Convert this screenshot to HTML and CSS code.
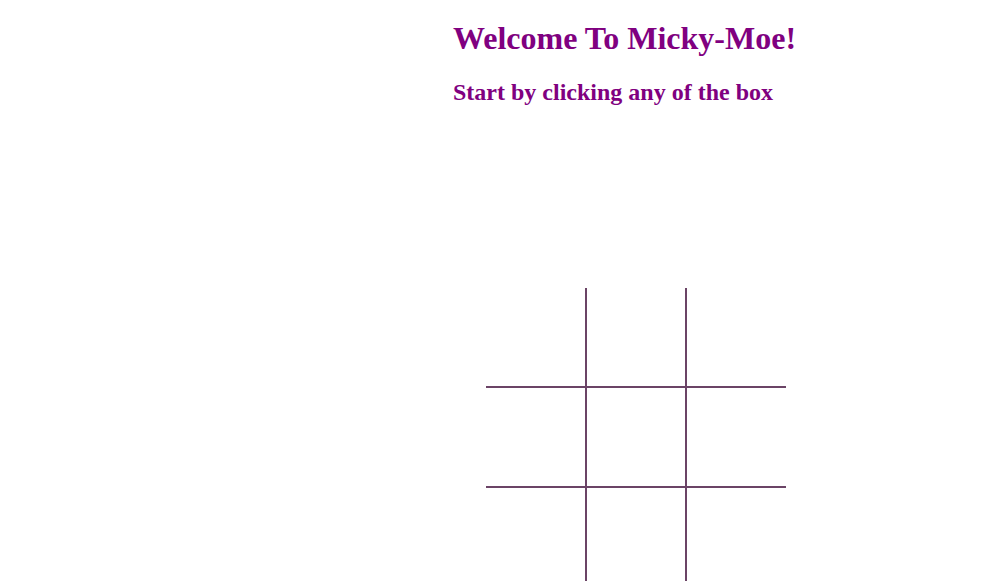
FILE: index.html
```html
<!DOCTYPE html>
<html>
<head>
<meta charset="utf-8">
<title>Micky-Moe</title>
<link rel="stylesheet" href="styles.css">
</head>
<body>
<div class="page">
  <h1 class="title">Welcome To Micky-Moe!</h1>
  <h2 class="subtitle">Start by clicking any of the box</h2>
  <div class="board">
    <div class="cell c1 r1"></div>
    <div class="cell c2 r1"></div>
    <div class="cell c3 r1"></div>
    <div class="cell c1 r2"></div>
    <div class="cell c2 r2"></div>
    <div class="cell c3 r2"></div>
    <div class="cell c1 r3"></div>
    <div class="cell c2 r3"></div>
    <div class="cell c3 r3"></div>
  </div>
</div>
</body>
</html>
```
FILE: styles.css
```css
html, body {
  background: #ffffff;
}
body {
  margin: 0;
  font-family: "Liberation Serif", "Times New Roman", serif;
}
.page {
  padding: 0 0 0 453px;
}
.title {
  color: #800080;
  font-size: 32px;
  font-weight: bold;
  margin: 20.44px 0 21.44px;
}
.subtitle {
  color: #800080;
  font-size: 24px;
  font-weight: bold;
  margin: 19.92px 0;
}
.board {
  display: grid;
  grid-template-columns: 101px 100px 99px;
  grid-template-rows: 100px 100px 100px;
  margin-left: 33px;
  margin-top: 182px;
  width: 300px;
}
.cell {
  box-sizing: border-box;
}
.c1, .c2 {
  border-right: 2px solid #6b4466;
}
.r1, .r2 {
  border-bottom: 2px solid #6b4466;
}
```
